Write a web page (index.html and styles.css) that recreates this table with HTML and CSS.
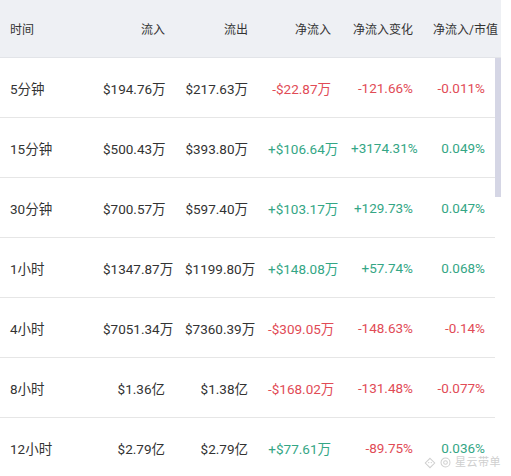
FILE: index.html
```html
<!DOCTYPE html>
<html lang="zh">
<head>
<meta charset="utf-8">
<link rel="stylesheet" href="styles.css">
</head>
<body>
<div class="wrap">
  <div class="head">
    <div class="c first">时间</div>
    <div class="c">流入</div>
    <div class="c">流出</div>
    <div class="c">净流入</div>
    <div class="c">净流入变化</div>
    <div class="c last">净流入/市值</div>
  </div>
  <div class="body">
    <div class="rows">
      <div class="row"><div class="c first">5分钟</div><div class="c">$194.76万</div><div class="c">$217.63万</div><div class="c red">-$22.87万</div><div class="c red">-121.66%</div><div class="c red">-0.011%</div></div>
      <div class="row"><div class="c first">15分钟</div><div class="c">$500.43万</div><div class="c">$393.80万</div><div class="c green">+$106.64万</div><div class="c green">+3174.31%</div><div class="c green">0.049%</div></div>
      <div class="row"><div class="c first">30分钟</div><div class="c">$700.57万</div><div class="c">$597.40万</div><div class="c green">+$103.17万</div><div class="c green">+129.73%</div><div class="c green">0.047%</div></div>
      <div class="row"><div class="c first">1小时</div><div class="c">$1347.87万</div><div class="c">$1199.80万</div><div class="c green">+$148.08万</div><div class="c green">+57.74%</div><div class="c green">0.068%</div></div>
      <div class="row"><div class="c first">4小时</div><div class="c">$7051.34万</div><div class="c">$7360.39万</div><div class="c red">-$309.05万</div><div class="c red">-148.63%</div><div class="c red">-0.14%</div></div>
      <div class="row"><div class="c first">8小时</div><div class="c">$1.36亿</div><div class="c">$1.38亿</div><div class="c red">-$168.02万</div><div class="c red">-131.48%</div><div class="c red">-0.077%</div></div>
      <div class="row"><div class="c first">12小时</div><div class="c">$2.79亿</div><div class="c">$2.79亿</div><div class="c green">+$77.61万</div><div class="c red">-89.75%</div><div class="c green">0.036%</div></div>
    </div>
    <div class="scroll"><div class="thumb"></div></div>
  </div>
  <div class="mark">
    <svg width="12" height="12" viewBox="0 0 14 14"><path d="M7 1.5 L12.5 7 L7 12.5 L1.5 7 Z" fill="none" stroke="#cfcfcf" stroke-width="1.2"/><circle cx="5.5" cy="6.5" r="0.8" fill="#cfcfcf"/><circle cx="8.5" cy="6.5" r="0.8" fill="#cfcfcf"/></svg>
    <svg width="11" height="11" viewBox="0 0 13 13"><circle cx="6.5" cy="6.5" r="5.3" fill="none" stroke="#cfcfcf" stroke-width="1.2"/><circle cx="6.5" cy="6.5" r="2.2" fill="none" stroke="#cfcfcf" stroke-width="1.2"/></svg>
    <span>星云带单</span>
  </div>
</div>
</body>
</html>
```
FILE: styles.css
```css
* { box-sizing: border-box; }
html, body { margin: 0; padding: 0; background: #fff; }
body {
  font-family: "Roboto", "Noto Sans CJK SC", sans-serif;
  font-size: 13.5px;
  color: #333;
}
.wrap { position: relative; width: 511px; height: 476px; overflow: hidden; }
.head {
  width: 501px;
  height: 58px;
  background: #eef0f4;
  border-bottom: 1px solid #e2e4e8;
  display: grid;
  grid-template-columns: 93px 82px 83px 83px 82px 78px;
  align-items: center;
  font-size: 12px;
}
.head .c { padding: 0 10px; text-align: right; white-space: nowrap; }
.head .c.first { text-align: left; }
.head .c.last { padding-right: 5px; }
.body { display: flex; width: 501px; }
.rows { width: 495px; }
.row {
  height: 60px;
  border-bottom: 1px solid #e6e6e6;
  display: grid;
  grid-template-columns: 93px 82px 83px 83px 82px 72px;
  align-items: center;
}
.row .c { padding: 0 10px; text-align: right; white-space: nowrap; }
.row .c.first { text-align: left; }
.red { color: #e14b56; }
.green { color: #34a685; }
.scroll { width: 6px; }
.thumb { height: 139px; background: #d5d6e5; }
.mark {
  position: absolute;
  left: 424px;
  top: 455px;
  display: flex;
  align-items: center;
  gap: 4px;
  color: #cfcfcf;
  font-size: 11px;
  line-height: 15px;
  letter-spacing: 0.5px;
}
```
